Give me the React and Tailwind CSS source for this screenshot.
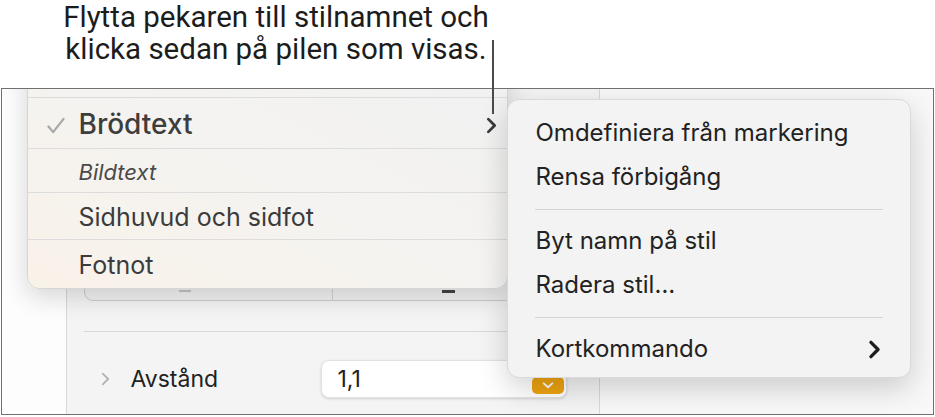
import React from "react";

const ui = { fontFamily: "Inter, 'Noto Sans', sans-serif" };

function Chevron({ className = "", color = "#333", w = 2.4 }) {
  return (
    <svg viewBox="0 0 10 16" className={className} fill="none">
      <polyline points="2,2 8,8 2,14" stroke={color} strokeWidth={w} strokeLinecap="round" strokeLinejoin="round" />
    </svg>
  );
}

function StyleMenu() {
  return (
    <div
      className="absolute left-[25px] top-[-42px] w-[481px] rounded-b-[12px] overflow-hidden border border-[#d6d6d6] bg-linear-to-tr from-[#f9f2e9] via-[#f4f3f1] to-[#f1f1f1] shadow-[0_8px_26px_rgba(0,0,0,0.16)]"
      style={ui}
    >
      <div className="h-[50px] border-b border-[#dcdcdc]" />
      <div className="h-[51px] border-b border-[#dcdcdc] flex items-center pt-[2px]">
        <svg viewBox="0 0 20 18" className="w-[20px] h-[17px] ml-[18px] mt-[2px]" fill="none">
          <polyline points="2,10 7,16 18,2" stroke="#a9a9a9" strokeWidth="2.4" strokeLinecap="round" strokeLinejoin="round" />
        </svg>
        <span className="ml-[13px] text-[28px] font-medium text-[#3d3d3d]">Brödtext</span>
        <Chevron className="w-[11px] h-[17px] ml-auto mr-[10px] mt-[3px]" color="#3a3a3a" w={2.6} />
      </div>
      <div className="h-[44px] border-b border-[#dcdcdc] flex items-center pl-[51px] pt-[3px]">
        <span className="text-[22px] italic text-[#4a4a4a]">Bildtext</span>
      </div>
      <div className="h-[47px] border-b border-[#dcdcdc] flex items-center pl-[51px] pt-[3px]">
        <span className="text-[25px] text-[#3b3b3b]">Sidhuvud och sidfot</span>
      </div>
      <div className="h-[48px] flex items-center pl-[51px] pt-[3px]">
        <span className="text-[25px] text-[#3b3b3b]">Fotnot</span>
      </div>
    </div>
  );
}

function ActionMenu() {
  const Item = ({ children, arrow }) => (
    <div className="h-[44px] flex items-center pl-[28px] pr-[29px] text-[24px] text-[#222]">
      <span>{children}</span>
      {arrow && <Chevron className="w-[13px] h-[19px] ml-auto" color="#1e1e1e" w={2.8} />}
    </div>
  );
  const Sep = () => (
    <div className="h-[20px] flex items-center px-[27px]">
      <div className="h-px w-full bg-[#d4d4d4]" />
    </div>
  );
  return (
    <div
      className="absolute left-[505px] top-[10px] w-[404px] rounded-[12px] bg-[#f3f3f3] border border-[#d9d9d9] pt-[11px] pb-[6px] shadow-[0_10px_30px_rgba(0,0,0,0.18)]"
      style={ui}
    >
      <Item>Omdefiniera från markering</Item>
      <Item>Rensa förbigång</Item>
      <Sep />
      <Item>Byt namn på stil</Item>
      <Item>Radera stil…</Item>
      <Sep />
      <Item arrow>Kortkommando</Item>
    </div>
  );
}

export default function App() {
  return (
    <div className="relative w-[935px] h-[417px] bg-white overflow-hidden">
      <div
        className="h-[88px] w-[552px] pt-[1px] text-center text-[29.5px] leading-[32px] text-[#1c1c1c]"
        style={{ fontFamily: "Roboto, 'Liberation Sans', sans-serif" }}
      >
        <p>Flytta pekaren till stilnamnet och</p>
        <p>klicka sedan på pilen som visas.</p>
      </div>

      <div className="relative ml-[0.5px] w-[933px] h-[327px] border-[1.5px] border-[#707070] overflow-hidden flex">
        <div className="w-[64px] bg-[#fdfdfd]" />
        <div className="w-[534px] bg-[#f4f4f4] border-l border-r border-[#d8d8d8]" style={ui}>
          <div className="mt-[100px] mx-[17px] h-[112px] rounded-b-[9px] border border-[#cdcdcd] bg-[#f2f2f2] flex">
            <div className="flex-1 border-r border-[#d2d2d2] flex items-end justify-center pb-[8px]">
              <div className="w-[12px] h-[2px] bg-[#c4c4c4] mr-[46px]" />
            </div>
            <div className="flex-1 flex items-end justify-center pb-[7px]">
              <div className="w-[13px] h-[3px] bg-[#444] -translate-x-[8px]" />
            </div>
          </div>
          <div className="mt-[30px] ml-[17px] h-px bg-[#d9d9d9]" />
          <div className="mt-[28px] h-[38px] flex items-center">
            <Chevron className="w-[9px] h-[16px] ml-[34px]" color="#b3b3b3" w={2} />
            <span className="ml-[21px] w-[190px] text-[23px] text-[#222]">Avstånd</span>
            <div className="relative w-[246px] h-[38px] rounded-[8px] bg-white border border-[#e2e2e2] shadow-[0_1px_3px_rgba(0,0,0,0.15)] flex items-center pl-[16px]">
              <span className="text-[23px] text-[#222]">1,1</span>
              <div className="absolute right-[2px] top-[16px] w-[32px] h-[17px] rounded-[5px] bg-[#eda310] flex items-center justify-center">
                <svg viewBox="0 0 14 8" className="w-[12px] h-[7px]" fill="none">
                  <polyline points="2,1.5 7,6 12,1.5" stroke="#fff" strokeWidth="2.2" strokeLinecap="round" strokeLinejoin="round" />
                </svg>
              </div>
            </div>
          </div>
        </div>
        <div className="flex-1 bg-[#f8f8f8]" />

        <StyleMenu />
        <ActionMenu />
      </div>

      <div className="absolute left-[492px] top-[40px] w-[1.5px] h-[74px] bg-[#4a4a4a] z-10" />
    </div>
  );
}
